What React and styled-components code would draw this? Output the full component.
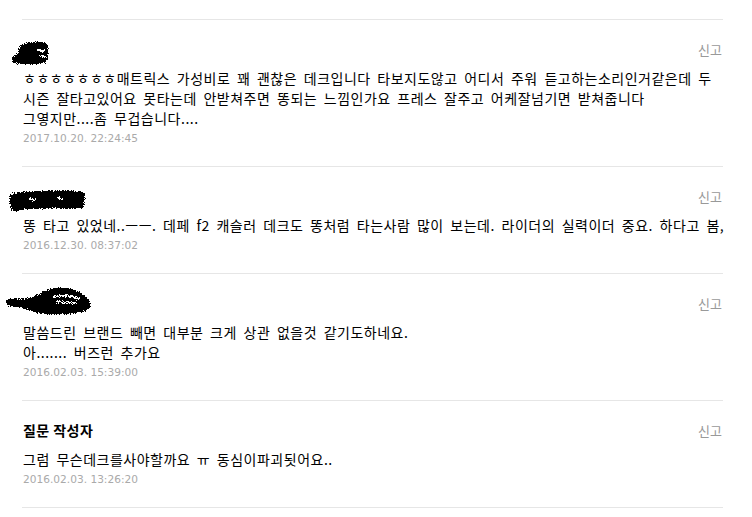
import React from "react"
import styled, { createGlobalStyle } from "styled-components"

const comments = [
  {
    scribble: "a",
    lines: [
      "ㅎㅎㅎㅎㅎㅎㅎ매트릭스 가성비로 꽤 괜찮은 데크입니다 타보지도않고 어디서 주워 듣고하는소리인거같은데 두",
      "시즌 잘타고있어요 못타는데 안받쳐주면 똥되는 느낌인가요 프레스 잘주고 어케잘넘기면 받쳐줍니다",
      "그옇지만....좀 무겁습니다....",
    ],
    date: "2017.10.20. 22:24:45",
  },
  {
    scribble: "b",
    lines: [
      "똥 타고 있었네..ㅡㅡ. 데페 f2 캐슬러 데크도 똥처럼 타는사람 많이 보는데. 라이더의 실력이더 중요. 하다고 봄,",
    ],
    date: "2016.12.30. 08:37:02",
  },
  {
    scribble: "c",
    lines: ["말씀드린 브랜드 빼면 대부분 크게 상관 없을것 같기도하네요.", "아....... 버즈런 추가요"],
    date: "2016.02.03. 15:39:00",
  },
  {
    author: "질문 작성자",
    lines: ["그럼 무슨데크를사야할까요 ㅠ 동심이파괴됫어요.."],
    date: "2016.02.03. 13:26:20",
  },
]

// blacked-out user names, each one drawn a bit differently
const scribbles = {
  a: {
    w: 38,
    h: 24,
    dx: -11,
    dy: 5,
    d: "M1 17 C2 14 5 13 7 13 C7 8 9 4 13 3 C15 1 18 2 21 1 C24 0 28 1 31 1 C35 1 37 3 37 7 C38 11 37 17 36 21 C31 23 24 23 18 23 C12 23 6 23 3 22 C1 21 0 19 1 17 Z",
    holes: "M27 9 L33 10 M28 15 L34 16",
  },
  b: {
    w: 78,
    h: 22,
    dx: -13,
    dy: 7,
    d: "M1 4 C8 1 20 2 32 1 C44 0 58 0 71 1 C76 2 77 5 76 9 C75 12 76 15 74 18 C60 19 44 18 30 19 C20 19 10 20 6 22 C3 21 1 18 1 14 C0 10 0 7 1 4 Z",
    holes: "M20 9 L26 10 M48 8 L54 9",
  },
  c: {
    w: 90,
    h: 29,
    dx: -18,
    dy: -3,
    d: "M1 14 C5 10 12 11 18 12 C26 12 32 9 38 5 C44 1 54 0 63 1 C71 2 78 5 82 10 C87 14 88 20 83 23 C72 28 54 28 40 27 C30 26 22 21 14 20 C7 20 2 19 1 14 Z",
    holes: "M49 10 C57 8 67 8 75 12 M53 15 L71 16",
  },
}

function Scribble({ kind }) {
  const s = scribbles[kind]
  const id = `rough-${kind}`
  return (
    <Redacted width={s.w} height={s.h} viewBox={`0 0 ${s.w} ${s.h}`} $dx={s.dx} $dy={s.dy}>
      <defs>
        <mask id={`${id}-m`}>
          <rect width={s.w} height={s.h} fill="#fff" />
          <path d={s.holes} stroke="#000" strokeWidth="2.2" strokeLinecap="round" fill="none" />
        </mask>
        <filter
          id={id}
          x="-10%"
          y="-20%"
          width="120%"
          height="140%"
          colorInterpolationFilters="sRGB"
        >
          <feGaussianBlur in="SourceAlpha" stdDeviation="1.3" result="soft" />
          <feTurbulence type="fractalNoise" baseFrequency="1.1" numOctaves="1" seed="3" result="noise" />
          <feColorMatrix
            in="noise"
            type="matrix"
            values="0 0 0 0 0  0 0 0 0 0  0 0 0 0 0  2.5 0 0 0 -0.75"
            result="na"
          />
          <feComposite in="soft" in2="na" operator="arithmetic" k1="0" k2="1" k3="0.7" k4="-0.38" result="mix" />
          <feComponentTransfer in="mix">
            <feFuncR type="linear" slope="0" intercept="0" />
            <feFuncG type="linear" slope="0" intercept="0" />
            <feFuncB type="linear" slope="0" intercept="0" />
            <feFuncA type="discrete" tableValues="0 1" />
          </feComponentTransfer>
        </filter>
      </defs>
      <g filter={`url(#${id})`}>
        <path d={s.d} fill="#000" mask={`url(#${id}-m)`} />
      </g>
    </Redacted>
  )
}

export default function App() {
  return (
    <>
      <GlobalStyle />
      <Page>
        <List>
          {comments.map((c, i) => (
            <Comment key={i}>
              <Header>
                {c.author ? <Author>{c.author}</Author> : <Scribble kind={c.scribble} />}
                <Report>신고</Report>
              </Header>
              <Body>
                {c.lines.map((l, j) => (
                  <Line key={j}>{l}</Line>
                ))}
              </Body>
              <DateText>{c.date}</DateText>
            </Comment>
          ))}
        </List>
      </Page>
    </>
  )
}

const GlobalStyle = createGlobalStyle`
  body {
    margin: 0;
    background: #fff;
    font-family: "Noto Sans CJK KR", "Noto Sans", sans-serif;
  }
`

const Page = styled.div`
  padding: 19px 0 0 22px;
`

const List = styled.ul`
  width: 701px;
  margin: 0;
  padding: 0;
  list-style: none;
  border-top: 1px solid #e6e6e6;
`

const Comment = styled.li`
  padding: 16px 0 18px;
  border-bottom: 1px solid #e6e6e6;
`

const Header = styled.div`
  display: flex;
  justify-content: space-between;
  align-items: center;
  height: 26px;
`

const Redacted = styled.svg`
  flex-shrink: 0;
  align-self: flex-start;
  margin-left: ${(p) => p.$dx}px;
  margin-top: ${(p) => p.$dy}px;
  overflow: visible;
`

const Author = styled.span`
  font-size: 14px;
  font-weight: bold;
  letter-spacing: 0.45px;
  color: #000;
  padding-left: 1px;
`

const Report = styled.span`
  font-size: 13px;
  color: #999;
  padding-right: 1px;
`

const Body = styled.div`
  margin-top: 6px;
  padding-left: 1px;
  font-size: 14px;
  line-height: 20px;
  letter-spacing: 0.5px;
  word-spacing: 3px;
  color: #000;
`

const Line = styled.div`
  white-space: nowrap;
`

const DateText = styled.div`
  padding-left: 1px;
  font-family: "DejaVu Sans", sans-serif;
  font-size: 10.6px;
  line-height: 20px;
  color: #aaa;
`
